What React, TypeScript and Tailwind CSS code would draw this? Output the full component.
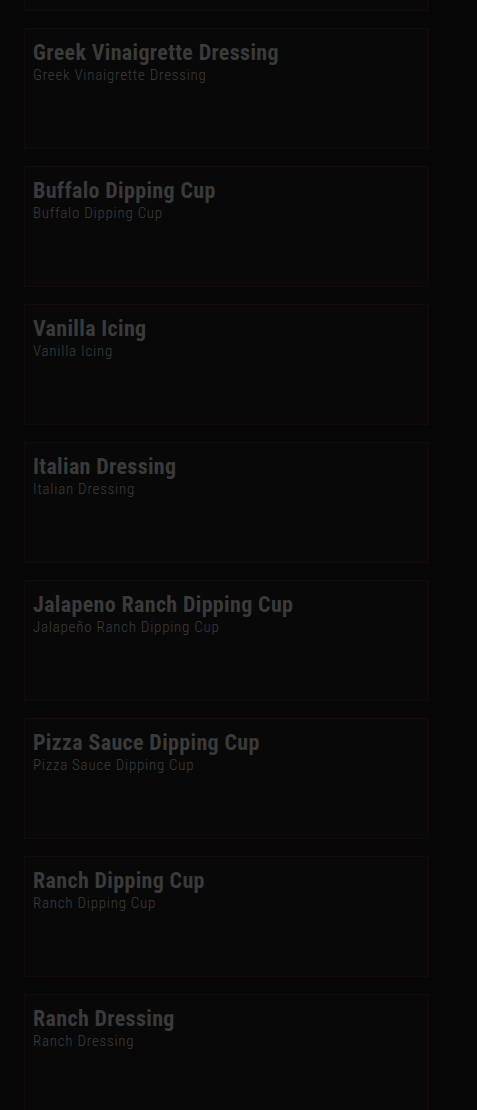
const items = [
  { title: "Greek Vinaigrette Dressing", sub: "Greek Vinaigrette Dressing" },
  { title: "Buffalo Dipping Cup", sub: "Buffalo Dipping Cup" },
  { title: "Vanilla Icing", sub: "Vanilla Icing" },
  { title: "Italian Dressing", sub: "Italian Dressing" },
  { title: "Jalapeno Ranch Dipping Cup", sub: "Jalapeño Ranch Dipping Cup" },
  { title: "Pizza Sauce Dipping Cup", sub: "Pizza Sauce Dipping Cup" },
  { title: "Ranch Dipping Cup", sub: "Ranch Dipping Cup" },
  { title: "Ranch Dressing", sub: "Ranch Dressing" },
];

function Card({ title, sub }: { title: string; sub: string }) {
  return (
    <div className="h-[121px] shrink-0 border border-[#140a0b] bg-[#080808] px-2 pt-[11px]">
      <h3 className="text-[22px] font-bold leading-[26px] text-[#3a3a3a] tracking-[0.35px]">{title}</h3>
      <p className="text-[15px] font-light leading-[18px] text-[#3c3c3c] tracking-[0.75px]">{sub}</p>
    </div>
  );
}

export default function App() {
  return (
    <div
      className="h-[1110px] w-full overflow-hidden bg-[#060606]"
      style={{ fontFamily: '"Roboto Condensed", "Liberation Sans Narrow", Roboto, sans-serif' }}
    >
      <div className="mt-[-110px] flex w-[405px] flex-col gap-[17px] ml-6">
        <div className="h-[121px] border border-[#140a0b] bg-[#080808]" />
        {items.map((it) => (
          <Card key={it.title} {...it} />
        ))}
      </div>
    </div>
  );
}
